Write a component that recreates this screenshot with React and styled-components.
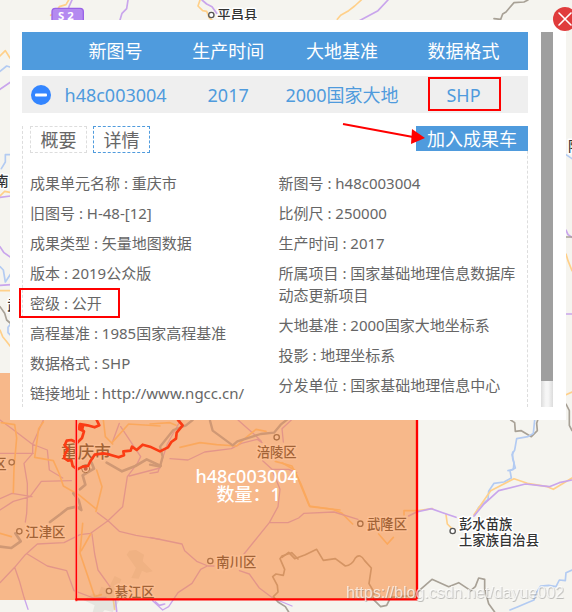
import styled, { createGlobalStyle } from 'styled-components'

const colors = {
  primary: '#4f9bdd',
  text: '#666',
  row: '#efefef',
  land: '#f5f4ef',
  mark: '#ff0000',
  motorway: '#c9a5ec',
  road: '#ffd08a',
  river: '#b3cbf2',
  border: '#a8a196',
  water: '#9dabbd',
}

const GlobalStyle = createGlobalStyle`
  * {
    box-sizing: border-box;
  }
  body {
    margin: 0;
    font-family: 'Noto Sans', 'Noto Sans CJK SC', sans-serif;
    color: ${colors.text};
  }
  button {
    padding: 0;
    border: 0;
    background: none;
    font: inherit;
    color: inherit;
    cursor: pointer;
  }
`

const Page = styled.main`
  position: relative;
  min-height: 100vh;
  overflow: hidden;
  display: flex;
  flex-direction: column;
  background: ${colors.land};
`

const MapCanvas = styled.svg`
  position: absolute;
  inset: 0;
  width: 100%;
  height: 100%;
  fill: none;
  stroke-linejoin: round;
  stroke-linecap: round;
`

const Line = styled.path`
  stroke: ${({ $kind }) => colors[$kind]};
  stroke-width: ${({ $width }) => $width || 5};
`

const PlaceName = styled.text`
  fill: #333;
  stroke: #fff;
  stroke-width: 9px;
  paint-order: stroke;
  font-size: ${({ $large }) => ($large ? 50 : 40)}px;
  font-weight: 500;
`

const PlaceDot = styled.circle`
  fill: #fff;
  stroke: #555;
  stroke-width: 4px;
`

const SheetLabel = styled.text`
  fill: #fff;
  font-size: 54px;
  font-weight: 500;
  text-anchor: middle;
`

const Watermark = styled.text`
  font-family: 'Liberation Sans', sans-serif;
  font-size: 48px;
  fill: #fff;
  fill-opacity: 0.7;
  filter: drop-shadow(2px 3px 1px rgba(90, 90, 90, 0.5));
`

const Dialog = styled.section`
  position: relative;
  display: flex;
  gap: 13px;
  margin: 20px 6px 0 10px;
  padding: 12px 13px 13px 12px;
  background: #fff;
`

const CloseButton = styled.button`
  position: absolute;
  top: -13px;
  right: -11px;
  width: 24px;
  height: 24px;

  svg {
    display: block;
  }
`

const Content = styled.div`
  flex: 1;
  min-width: 0;
`

const ScrollTrack = styled.div`
  width: 12px;
  background: linear-gradient(90deg, #dcdcdc, #f6f6f6 40%, #f6f6f6 60%, #dcdcdc);
`

const ScrollThumb = styled.div`
  height: 93%;
  background: #9f9f9f;
`

const ResultTable = styled.table`
  width: 100%;
  table-layout: fixed;
  border-spacing: 0;
  font-size: 18px;
  line-height: 24px;
  text-align: center;
`

const HeadCell = styled.th`
  width: ${({ $width }) => $width};
  height: 38px;
  padding: 0;
  background: ${colors.primary};
  color: #fff;
  font-weight: 400;
`

const Cell = styled.td`
  height: 43px;
  padding: 0;
  border-top: 6px solid #fff;
  background: ${colors.row};
  color: ${colors.primary};
  white-space: nowrap;
`

const ToggleButton = styled.button`
  display: block;
  width: 20px;
  height: 20px;
  margin: 0 auto;

  svg {
    display: block;
  }
`

const Marked = styled.span`
  position: relative;

  &::after {
    content: '';
    position: absolute;
    inset: ${({ $inset }) => $inset};
    border: 2px solid ${colors.mark};
  }
`

const Details = styled.div`
  margin-top: 13px;
  padding: 0 0 3px 7px;
  border: 1px dashed #ddd;
  border-width: 0 1px;
`

const Toolbar = styled.div`
  display: flex;
  align-items: flex-start;
  justify-content: space-between;
  margin-right: -1px;
`

const Tabs = styled.div`
  display: flex;
  gap: 6px;
`

const Tab = styled.button`
  width: 57px;
  height: 27px;
  border: 1px dashed ${({ $active }) => ($active ? colors.primary : '#ddd')};
  font-size: 18px;
  line-height: 24px;
`

const CartButton = styled.button`
  position: relative;
  width: 112px;
  height: 25px;
  background: ${colors.primary};
  color: #fff;
  font-size: 18px;
  line-height: 24px;
`

const Arrow = styled.svg`
  position: absolute;
  top: -4px;
  left: -74px;
`

const Columns = styled.div`
  display: grid;
  grid-template-columns: 1fr 1fr;
  margin-top: 19px;
`

const FieldList = styled.ul`
  display: flex;
  flex-direction: column;
  gap: 8px;
  margin: 0;
  padding: 0;
  list-style: none;
  font-size: 15px;
  line-height: 22px;
`

const headings = [
  { label: '', width: '7.5%' },
  { label: '新图号', width: '22%' },
  { label: '生产时间', width: '22.5%' },
  { label: '大地基准', width: '22.5%' },
  { label: '数据格式', width: '25.5%' },
]

const leftFields = [
  ['成果单元名称', '重庆市'],
  ['旧图号', 'H-48-[12]'],
  ['成果类型', '矢量地图数据'],
  ['版本', '2019公众版'],
  ['密级', '公开', true],
  ['高程基准', '1985国家高程基准'],
  ['数据格式', 'SHP'],
  ['链接地址', 'http://www.ngcc.cn/'],
]

const rightFields = [
  ['新图号', 'h48c003004'],
  ['比例尺', '250000'],
  ['生产时间', '2017'],
  ['所属项目', '国家基础地理信息数据库动态更新项目'],
  ['大地基准', '2000国家大地坐标系'],
  ['投影', '地理坐标系'],
  ['分发单位', '国家基础地理信息中心'],
]

function BaseMap() {
  return (
    <MapCanvas viewBox="0 0 1716 1836" preserveAspectRatio="xMidYMid slice">
      <g>
        <Line $kind="road" d="M206 0l-8 14-20 6-12 18-14 8M600 0l-6 18 14 14 12 2 8 20 10 8" />
        <Line $kind="motorway" d="M216 0l-10 22 2 40M384 0l-4 26-14 14-6 20M606 0l14 12 16 8 14 20" />
        <rect x="156" y="25" width="94" height="50" rx="10" fill="#b48af0" stroke="#9a63e6" strokeWidth="4" />
        <text x="174" y="60" fill="#fff" fontSize="34" fontWeight="700">S 2</text>
        <PlaceDot cx="634" cy="45" r="8" />
        <PlaceName x="652" y="60">平昌县</PlaceName>
      </g>
      <g>
        <Line $kind="road" d="M1084 0l-20 18-18 14-24 14-10 12M0 168l16-16 14 22M0 588l14-14 20 4M0 990l8 20 10 12 14 18M0 872h32" />
        <Line $kind="motorway" d="M1164 0l-30 32-56 30M0 268l32-22M0 592l32-4M0 740l12 18 20 14M0 856l34-2" />
        <Line $kind="river" d="M0 214l20-16 12 4M4 506l12-20 0-22h16M0 800l10 10 6 36 16-24M32 972l-8 10 0 16 8 8" />
        <Line $kind="border" d="M1584 0l-12 6-30 2-14 16-10 12-10 6-6 16-20-2M0 920l14 20 6 20 14 12" />
        <PlaceName x="-14" y="558">南</PlaceName>
        <PlaceName x="22" y="930">武</PlaceName>
      </g>
      <g>
        <PlaceName x="1704" y="452">阳</PlaceName>
        <Line $kind="river" d="M1698 464l18 12" />
        <Line $kind="motorway" d="M1698 690l6 14 12 8M1698 942h18" />
        <Line $kind="road" d="M1698 762l6 20 12 30M1698 1184l18-8" />
        <Line $kind="border" d="M1698 711h18M1698 1212l10 20 0 44 8 16" />
      </g>
      <g transform="translate(846 930)">
        <Line $kind="border" d="M686 330l12 8 2 26 18-2 30 18 18-18-2-22 4-12" />
        <Line $kind="river" d="M758 330l-4 40-16 10-34 6-6 34-8 14 6 24-2 20-16 4" />
      </g>
      <g transform="translate(846 1356)">
        <Line $kind="river" d="M692 0l0 20 8 28-16 8 4 22-22 12-30 4-16 24-2 24-28 24-12 24M870 354l-18 8-2 24-18-2-10 20-22-4-24 2-14 22-6 20-20 8-28 12-24 10" />
        <Line $kind="road" d="M492 188l4 28 14 14M576 188l50-72 70-36 40 14 60 10 18 8 56-34M366 188l0-12 42 0 44-6M0 32l38 22 20 50 24 58 70 10 28 12 32 32M290 246l26 30 18-20" />
        <Line $kind="motorway" d="M380 192l24-12 44-10 34 12 40 14M576 192l28-34 46-42 80-20 72 8 30-12 38-8" />
        <Line
          $kind="border"
          d="M0 316L20 301L38 320L70 308L104 292L124 325L160 320L190 342Q210 340 220 318Q234 302 248 326L268 348L261 395L276 420L274 442L296 464L314 460L326 436L395 430L450 382L500 404L530 392L566 416L580 404L590 378L608 382L608 410L620 455L638 480"
        />
      </g>
      <g transform="translate(0 1230)">
        <Line $kind="motorway" $width="4" d="M0 30l36 26 60 46 46 18 6 60 40 24M130 30l-32 72 0 28M0 130h100M98 130l-26 30 10 60 0 40-2 50-4 26M0 300l40-26 50-14 34-46 90-2M0 266l36-16 60 10M0 518l44-46 32-38 36-32 80-4 48-24 32-4M44 472l14 40 14 50 12 36M82 432l60 36 58 14 22 60 58 22 38-2M272 370l52-38 44-42 14-90 30-40 10-20-60-90M276 372l8 60 10 48 36 50M292 308l32 24 34 32 50 12 72 12M336 100l22-60M388 198l92-24" />
        <Line $kind="road" $width="5" d="M4 38l40 6 6 40-8 90-2 74M130 36l-14 20-12 86 56 10 18 40 12 36 46 26 54 44M290 180l16 50-18 74M248 340l-8 90 24 70 20 60 20-6M310 30l6 50 22 22M336 98l50-56 94 6M0 370l34 10M340 570l4 28M272 372l-28 50" />
        <Line $kind="water" $width="8" d="M150 336l32-24 20-16 28-6 14 10-8-30-16-20M240 238l16-14-8-28 34-20-8-20M320 158l46 26 40-16 34-20 42 20M0 410l34 4 28-20-16-24" />
        <Line $kind="motorway" d="M346 564l4 40M466 576l12 10 16-4" />
      </g>
      <g transform="translate(450 1230)">
        <Line $kind="motorway" $width="4" d="M60 146l54 4 50-24 80-10 30-16 48-12 14 10M264 30l50 44 20 20M400 96l-4-40 28-26M0 190l24-4 28-84 40-72M338 152l28 26 24 60-6 52-26 48-76 94M366 178l50 0 24 10M358 338l56 0 32-14 16-14 90-4 72 22M0 382l38 8 58 12 8 20 36 32 34 14 18 0M172 468l-20 10-26 42-42 28-28 42-18 10-30-28M268 482l30 10 30 42 40 30 58 24" />
        <Line $kind="road" d="M90 112l60-14 50 6 60 4 24-22 34-28 30 6M376 154l50 14 26 52 28 70 90 10M0 42l60-4 18 8" />
        <Line $kind="water" $width="7" d="M180 32l8 30 60 44 14-12 70-22 40-4 20-24 20-16M0 164l30 6 8-30-8-30 40-50 38-14 20-16" />
        <Line
          $kind="border"
          d="M416 606L406 590L384 576L370 560L384 546L382 526L368 500L378 492L400 496L404 478L390 446L396 438L425 428L444 447"
        />
      </g>
      <g fill="#b9b6b0" fillOpacity="0.25">
        <path d="M380 1664l8-12 20-2 24 14-4 20 30 30-18 4-14-6-10 24-22-2 14-30-10-14zM250 1800l30-20 14 6 10-26 20 8 20-40 20 10-16 40 10 24-20 34-24-6-18 20-20-6 8-28z" />
      </g>
      <PlaceDot cx="35" cy="1387" r="8" />
      <PlaceName x="-20" y="1406">区</PlaceName>
      <PlaceDot cx="58" cy="1594" r="8" />
      <PlaceName x="76" y="1612">江津区</PlaceName>
      <PlaceDot cx="327" cy="1773" r="8" />
      <PlaceName x="344" y="1790">綦江区</PlaceName>
      <PlaceDot cx="631" cy="1683" r="8" />
      <PlaceName x="649" y="1702">南川区</PlaceName>
      <PlaceDot cx="830" cy="1312" r="8" />
      <PlaceName x="770" y="1370">涪陵区</PlaceName>
      <PlaceDot cx="1081" cy="1571" r="8" />
      <PlaceName x="1101" y="1588">武隆区</PlaceName>
      <PlaceDot cx="1358" cy="1593" r="8" />
      <PlaceName x="1377" y="1587">彭水苗族</PlaceName>
      <PlaceName x="1377" y="1634">土家族自治县</PlaceName>
      <circle cx="257" cy="1406" r="12" stroke="#555" strokeWidth="3" fill="#fff" />
      <circle cx="257" cy="1406" r="6" fill="#803050" />
      <PlaceName $large x="183" y="1374">重庆市</PlaceName>
      <rect y="1119" width="1248" height="681" fill="rgb(247, 137, 59)" fillOpacity="0.56" />
      <path
        d="M290 1260L298 1276L284 1282L262 1276L240 1272L238 1284L252 1294L246 1314L232 1328L214 1320L200 1322L194 1336L204 1348L196 1360L192 1374L204 1382L214 1380L218 1398L232 1408L248 1400L264 1398L272 1382L284 1364L310 1360L330 1364L356 1372L372 1366L370 1354L392 1352L396 1340L410 1350L428 1334L450 1340L480 1354L504 1342L514 1326L528 1316L530 1298L548 1276L534 1260"
        stroke="#fb3c14"
        strokeWidth="8"
      />
      <path d="M236 1272l18 4-6 20-14-6z" fill="#fb3c14" />
      <path d="M229 1100v700" stroke="#ff9b8a" strokeWidth="9" />
      <path d="M229 1100v700" stroke={colors.mark} strokeWidth="4" />
      <path d="M229 1798h1022V1100" stroke={colors.mark} strokeWidth="7" />
      <SheetLabel x="740" y="1450">h48c003004</SheetLabel>
      <SheetLabel x="746" y="1504">数量：1</SheetLabel>
      <Watermark x="1038" y="1794">https://blog.csdn.net/dayue002</Watermark>
    </MapCanvas>
  )
}

function Fields({ items }) {
  return (
    <FieldList>
      {items.map(([name, value, marked]) => (
        <li key={name}>
          {marked ? (
            <Marked $inset="-5px -18px -5px -11px">
              {name} : {value}
            </Marked>
          ) : (
            `${name} : ${value}`
          )}
        </li>
      ))}
    </FieldList>
  )
}

function App() {
  return (
    <Page>
      <GlobalStyle />
      <BaseMap />
      <Dialog role="dialog" aria-label="新图号">
        <Content>
          <ResultTable>
            <thead>
              <tr>
                {headings.map(({ label, width }) => (
                  <HeadCell key={width + label} $width={width}>
                    {label}
                  </HeadCell>
                ))}
              </tr>
            </thead>
            <tbody>
              <tr>
                <Cell>
                  <ToggleButton aria-label="详情">
                    <svg width="20" height="20" viewBox="0 0 20 20">
                      <circle cx="10" cy="10" r="10" fill="#3385ff" />
                      <rect x="4" y="8.5" width="12" height="3" rx="1" fill="#fff" />
                    </svg>
                  </ToggleButton>
                </Cell>
                <Cell>h48c003004</Cell>
                <Cell>2017</Cell>
                <Cell>2000国家大地</Cell>
                <Cell>
                  <Marked $inset="-6px -20px -4px -18px">SHP</Marked>
                </Cell>
              </tr>
            </tbody>
          </ResultTable>
          <Details>
            <Toolbar>
              <Tabs>
                <Tab>概要</Tab>
                <Tab $active>详情</Tab>
              </Tabs>
              <CartButton>
                加入成果车
                <Arrow width="84" height="24" viewBox="0 0 84 24">
                  <path d="M1 2l70 13" stroke={colors.mark} strokeWidth="2" />
                  <path d="M70 7l13 9-14 6z" fill={colors.mark} />
                </Arrow>
              </CartButton>
            </Toolbar>
            <Columns>
              <Fields items={leftFields} />
              <Fields items={rightFields} />
            </Columns>
          </Details>
        </Content>
        <ScrollTrack>
          <ScrollThumb />
        </ScrollTrack>
        <CloseButton aria-label="关闭">
          <svg width="24" height="24" viewBox="0 0 24 24">
            <circle cx="12" cy="12" r="12" fill="#e03c3c" />
            <path d="M6 6l12 12M18 6L6 18" stroke="#fff" strokeWidth="1.6" strokeLinecap="round" />
          </svg>
        </CloseButton>
      </Dialog>
    </Page>
  )
}

export default App
